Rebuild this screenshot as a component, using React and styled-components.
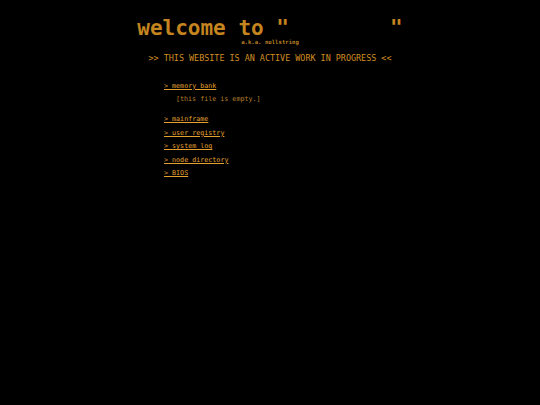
import React from "react";
import styled, { createGlobalStyle } from "styled-components";
//
const GlobalStyle = createGlobalStyle`
  html, body {
    margin: 0;
    padding: 0;
    background: #000;
  }
  body {
    font-family: "DejaVu Sans Mono", "Liberation Mono", monospace;
    color: #d08c1c;
    min-height: 405px;
  }
`;
const Page = styled.div`
  width: 540px;
  padding-top: 17px;
`;
const Header = styled.header`
  display: flex;
  flex-direction: column;
  align-items: center;
`;
const Title = styled.h1`
  margin: 0;
  font-size: 21px;
  line-height: 22px;
  font-weight: bold;
  white-space: pre;
  color: #c4841f;
  .name {
    color: #000;
  }
`;
const Alias = styled.div`
  font-size: 5.65px;
  line-height: 7px;
  font-weight: bold;
  color: #b98127;
`;
const Notice = styled.p`
  margin: 7px 0 0;
  font-size: 8.42px;
  line-height: 10px;
  color: #d18e20;
`;
const Nav = styled.ul`
  list-style: none;
  margin: 16.5px 0 0 164px;
  padding: 0;
  font-size: 6.7px;
  line-height: 13.5px;
`;
const Item = styled.li`
  margin-top: ${p => (p.spaced ? "6.5px" : "0")};
`;
const Link = styled.a`
  color: #e3a130;
  text-decoration: underline;
  cursor: pointer;
`;
const Empty = styled.div`
  padding-left: 12px;
  color: #b57e2a;
`;
//
const links = [
  { label: "mainframe", spaced: true },
  { label: "user registry" },
  { label: "system log" },
  { label: "node directory" },
  { label: "BIOS" }
];
//
export default () => {
  return (
    <Page>
      <GlobalStyle />
      <Header>
        <Title>
          welcome to "<span className="name">        </span>"
        </Title>
        <Alias>a.k.a. nullstring</Alias>
        <Notice>&gt;&gt; THIS WEBSITE IS AN ACTIVE WORK IN PROGRESS &lt;&lt;</Notice>
      </Header>
      <Nav>
        <Item>
          <Link>&gt; memory bank</Link>
          <Empty>[this file is empty.]</Empty>
        </Item>
        {links.map(l => (
          <Item key={l.label} spaced={l.spaced}>
            <Link>&gt; {l.label}</Link>
          </Item>
        ))}
      </Nav>
    </Page>
  );
};
